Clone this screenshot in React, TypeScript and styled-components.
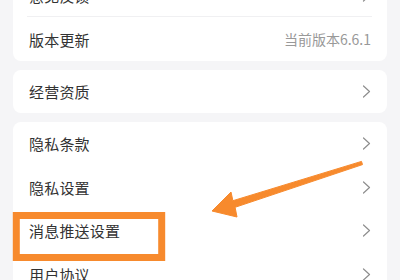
import React from "react";
import styled, { createGlobalStyle } from "styled-components";

const Global = createGlobalStyle`
  html, body { margin: 0; padding: 0; background: #f5f5f7; }
  body { font-family: "Noto Sans CJK SC", "Noto Sans", sans-serif; overflow: hidden; }
`;

const Page = styled.div`
  position: relative;
  width: 400px;
  height: 280px;
  overflow: hidden;
  background: #f5f5f7;
`;

const List = styled.div`
  display: flex;
  flex-direction: column;
  gap: 9px;
  padding: 0 13px;
  margin-top: -26px;
`;

const Card = styled.div`
  background: #ffffff;
  border-radius: 8px;
  overflow: hidden;
`;

const Row = styled.div<{ $divider?: boolean }>`
  height: 43.4px;
  display: flex;
  align-items: center;
  justify-content: space-between;
  padding: 0 16px;
  position: relative;
  box-sizing: border-box;
  ${(p) =>
    p.$divider
      ? `&::after { content: ""; position: absolute; left: 14px; right: 15px; bottom: 0; height: 1px; background: #f0f0f2; }`
      : ""}
`;

const Label = styled.span`
  font-size: 15px;
  color: #333333;
  letter-spacing: 0.2px;
`;

const Value = styled.span`
  font-size: 14px;
  color: #999999;
`;

const Chevron = () => (
  <svg width="9" height="13" viewBox="0 0 9 13">
    <path d="M1.5 1 L7.5 6.5 L1.5 12" fill="none" stroke="#8e8e8e" strokeWidth="1.2" strokeLinecap="round" strokeLinejoin="round" />
  </svg>
);

const Overlay = styled.svg`
  position: absolute;
  left: 0;
  top: 0;
  width: 400px;
  height: 280px;
  pointer-events: none;
`;

export default function App() {
  return (
    <Page>
      <Global />
      <List>
        <Card>
          <Row $divider>
            <Label>意见反馈</Label>
            <Chevron />
          </Row>
          <Row>
            <Label>版本更新</Label>
            <Value>当前版本6.6.1</Value>
          </Row>
        </Card>
        <Card>
          <Row>
            <Label>经营资质</Label>
            <Chevron />
          </Row>
        </Card>
        <Card>
          <Row>
            <Label>隐私条款</Label>
            <Chevron />
          </Row>
          <Row>
            <Label>隐私设置</Label>
            <Chevron />
          </Row>
          <Row>
            <Label>消息推送设置</Label>
            <Chevron />
          </Row>
          <Row>
            <Label>用户协议</Label>
            <Chevron />
          </Row>
        </Card>
      </List>
      <Overlay viewBox="0 0 400 280">
        <rect x="16.3" y="215.5" width="145.4" height="42" fill="none" stroke="#f78a2d" strokeWidth="7" />
        <polygon
          points="361.5,161.4 232.9,200.7 231,192 212,211 237,217 235.1,207.3 362.5,164.6"
          fill="#f78a2d"
          stroke="#f78a2d"
          strokeWidth="1"
          strokeLinejoin="round"
        />
      </Overlay>
    </Page>
  );
}
